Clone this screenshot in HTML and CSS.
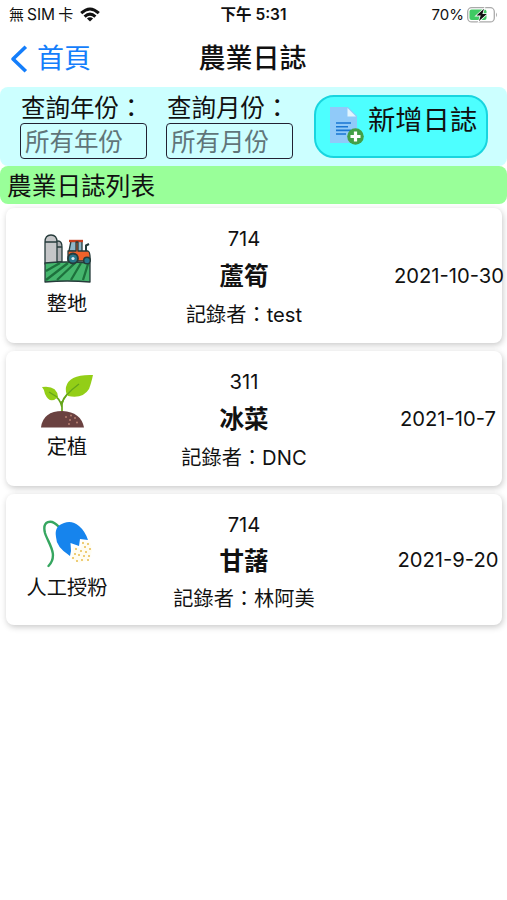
FILE: index.html
```html
<!DOCTYPE html>
<html lang="zh-TW">
<head>
    <meta charset="UTF-8">
    <meta name="viewport" content="width=device-width, initial-scale=1.0">
    <title>農業日誌</title>
    <link rel="stylesheet" href="styles.css">
</head>
<body>

    <div class="status-bar">
        <div class="carrier">
            <span>無<span class="sim">SIM</span>卡</span>
            <svg class="wifi" width="20" height="15" viewBox="0 0 20 15">
                <g fill="none" stroke="#111" stroke-width="3">
                    <path d="M1.2 6.2 Q10 -2.2 18.8 6.2"/>
                    <path d="M4.6 9.6 Q10 4.6 15.4 9.6"/>
                </g>
                <path d="M6.9 11.6 Q10 9 13.1 11.6 L10 14.6 Z" fill="#111"/>
            </svg>
        </div>
        <div class="clock">下午 5:31</div>
        <div class="battery">
            <span>70%</span>
            <svg width="31" height="16" viewBox="0 0 31 16">
                <rect x=".7" y=".7" width="26.6" height="14.2" rx="4" fill="#fff" stroke="#aaa" stroke-width="1.3"/>
                <rect x="2.5" y="2.5" width="17" height="10.6" rx="2" fill="#3fca63"/>
                <path d="M29 5.5 Q31 7.8 29 10.2 Z" fill="#aaa"/>
                <path d="M17 1.8 L9.5 8.6 H13.7 L12 14 L19.8 7 H15.4 Z" fill="#111" stroke="#fff" stroke-width="1.6" paint-order="stroke"/>
            </svg>
        </div>
    </div>

    <div class="nav-bar">
        <a class="back">
            <svg width="18" height="28" viewBox="0 0 18 28">
                <path d="M15.8 1.7 L3 14 L15.8 26.3" fill="none" stroke="#147efb" stroke-width="3.6" stroke-linejoin="round"/>
            </svg>
            <span>首頁</span>
        </a>
        <h1>農業日誌</h1>
    </div>

    <div class="filters">
        <div class="filter">
            <label for="year">查詢年份：</label>
            <input type="text" id="year" placeholder="所有年份">
        </div>
        <div class="filter">
            <label for="month">查詢月份：</label>
            <input type="text" id="month" placeholder="所有月份">
        </div>
        <button class="add-btn">
            <svg width="36" height="40" viewBox="0 0 36 40">
                <path d="M1 1 H19 L28 10 V37 H1 Z" fill="#90caf9"/>
                <path d="M18.5 2 V10.5 H27 Z" fill="#e1f5fe"/>
                <path d="M7 17 H22 M7 20.7 H19 M7 24.4 H22 M7 28 H17" stroke="#1976d2" stroke-width="1.6"/>
                <circle cx="26.5" cy="30.5" r="8.3" fill="#43a047"/>
                <path d="M26.5 25.5 V35.5 M21.5 30.5 H31.5" stroke="#fff" stroke-width="3.2"/>
            </svg>
            <span>新增日誌</span>
        </button>
    </div>

    <h2 class="list-title">農業日誌列表</h2>

    <div class="list">
        <div class="card">
            <div class="work">
                <svg width="50" height="50" viewBox="0 0 50 50" stroke="#263b3b" stroke-width="1.3" stroke-linejoin="round">
                    <path d="M12 28 V13 Q12 7 16 7 Q20 7 20 13 V28 Z" fill="#aeb0b3"/>
                    <path d="M3 30 V8 Q3 1 9 1 Q15 1 15 8 V30 Z" fill="#c5c6c8"/>
                    <path d="M3 8 H15 M15 13 H20" fill="none"/>
                    <path d="M27 17 L29 7 H40 V18 Z" fill="#8fb6c8"/>
                    <path d="M27 7 H41" stroke="#c8401f" stroke-width="2.4"/>
                    <path d="M26 17 H34 V8 H36 V17 H46 Q48.5 18 48 27 H26 Z" fill="#f0622a"/>
                    <path d="M44 17 V11.5 L47 10" fill="none" stroke-width="2"/>
                    <path d="M3 29 Q22 27 48 29 V48 Q25 46 3 48 Z" fill="#45b66d"/>
                    <path d="M18 29 L4 37 M26 29 L4 46 M33 29 L15 46 M39 29 L29 46 M46 30 L41 46" fill="none" stroke="#1d713c" stroke-width="2.3"/>
                    <circle cx="31" cy="24.5" r="5" fill="#27778a" stroke-width="1.8"/>
                    <circle cx="31" cy="24.5" r="1.6" fill="#dcecef" stroke="none"/>
                    <circle cx="45" cy="26.5" r="3.3" fill="#27778a" stroke-width="1.5"/>
                </svg>
                <span>整地</span>
            </div>
            <div class="info">
                <span>714</span>
                <b>蘆筍</b>
                <span>記錄者：test</span>
            </div>
            <div class="date">2021-10-30</div>
        </div>

        <div class="card">
            <div class="work planting">
                <svg width="54" height="55" viewBox="0 0 54 55">
                    <path d="M22 39 V27 M22 33 Q20 24 12 20 M22 29 Q24 20 39 11" fill="none" stroke="#65a51b" stroke-width="1.7"/>
                    <path d="M2 13 Q17 11 18 23 Q10 31 5 20 Q4 15 2 13 Z" fill="#93ce17"/>
                    <path d="M53 1 Q29 0 26 13 Q25 18 28 22 Q43 25 49 15 Q51 10 53 1 Z" fill="#93ce17"/>
                    <path d="M22 30 Q24 21 39 10 M17 23 L9 18" fill="none" stroke="#65a51b" stroke-width="1.3"/>
                    <path d="M1 53.5 Q3 37 22.5 37 Q41 38 44 53.5 Z" fill="#6a4140"/>
                    <g fill="#b77f70">
                        <circle cx="26" cy="43" r="1"/>
                        <circle cx="31" cy="41.5" r="1"/>
                        <circle cx="30" cy="46" r="1"/>
                        <circle cx="35" cy="44" r="1"/>
                        <circle cx="29" cy="50" r="1"/>
                        <circle cx="37" cy="48.5" r="1"/>
                    </g>
                </svg>
                <span>定植</span>
            </div>
            <div class="info">
                <span>311</span>
                <b>冰菜</b>
                <span>記錄者：DNC</span>
            </div>
            <div class="date">2021-10-7</div>
        </div>

        <div class="card short">
            <div class="work pollinate">
                <svg width="50" height="50" viewBox="0 0 50 50">
                    <path d="M17 8 C9 -1 0 2 3 14 C6 24 17 36 6.5 47" fill="none" stroke="#36a660" stroke-width="2.4" stroke-linecap="round"/>
                    <path d="M14 18 Q12 7 22 4 Q30 1 37 7 Q43 12 46 21 L38 20 L37 27 L28.5 24 L29 32 L28 37 Q14 28 14 18 Z" fill="#1684ed"/>
                    <path d="M31 33 L31.5 27 L39 30 L40 22 L48 23 L50 31 L48 40 L37 44 L29 40 Z" fill="#fffdf2"/>
                    <g fill="#e9bd4e">
                        <circle cx="41" cy="24" r="1"/>
                        <circle cx="46" cy="25" r="1"/>
                        <circle cx="43" cy="28" r="1"/>
                        <circle cx="48" cy="30" r="1"/>
                        <circle cx="34" cy="30" r="1"/>
                        <circle cx="39" cy="32" r="1"/>
                        <circle cx="44" cy="33" r="1"/>
                        <circle cx="33" cy="35" r="1"/>
                        <circle cx="37" cy="36" r="1"/>
                        <circle cx="42" cy="37" r="1"/>
                        <circle cx="47" cy="37" r="1"/>
                        <circle cx="31" cy="39" r="1"/>
                        <circle cx="35" cy="42" r="1"/>
                        <circle cx="40" cy="41" r="1"/>
                        <circle cx="46" cy="41" r="1"/>
                    </g>
                </svg>
                <span>人工授粉</span>
            </div>
            <div class="info">
                <span>714</span>
                <b>甘藷</b>
                <span>記錄者：林阿美</span>
            </div>
            <div class="date">2021-9-20</div>
        </div>
    </div>

</body>
</html>
```

FILE: styles.css
```css
* {
    box-sizing: border-box;
}

body {
    margin: 0;
    min-height: 100vh;
    font-family: Inter, "Noto Sans CJK TC", sans-serif;
    background-color: #fff;
    color: #111;
}

svg {
    display: block;
    flex-shrink: 0;
}

/* 狀態列 */
.status-bar {
    display: grid;
    grid-template-columns: 1fr auto 1fr;
    align-items: center;
    height: 30px;
    padding: 0 9px 0 9px;
    font-size: 15px;
    line-height: 28px;
}

.carrier {
    display: flex;
    align-items: center;
    gap: 7px;
}

.sim {
    margin: 0 3px;
    font-size: 15.5px;
}

.wifi {
    margin-top: -2px;
}

.clock {
    font-weight: 600;
    font-size: 15.5px;
}

.battery {
    display: flex;
    align-items: center;
    justify-content: flex-end;
    gap: 3px;
}

/* 導覽列 */
.nav-bar {
    display: grid;
    grid-template-columns: 1fr auto 1fr;
    align-items: center;
    height: 57px;
    padding: 0 12px 0 10px;
}

.back {
    display: flex;
    align-items: center;
    gap: 9px;
    font-size: 27px;
    line-height: 40px;
    color: #147efb;
}

.nav-bar h1 {
    margin: 0;
    font-size: 27px;
    font-weight: 500;
    line-height: 40px;
}

/* 查詢 */
.filters {
    display: flex;
    height: 79px;
    padding: 8px 19px 0 20px;
    background-color: #ccffff;
    border-radius: 8px;
}

.filter {
    width: 127px;
    margin-right: 20px;
}

.filter + .filter {
    margin-left: -1px;
    margin-right: 21px;
}

.filter label {
    display: block;
    padding-left: 1px;
    height: 28px;
    font-size: 24.5px;
    line-height: 27px;
    white-space: nowrap;
}

.filter input {
    display: block;
    width: 127px;
    height: 36px;
    padding: 2px 4px 0;
    border: 1.5px solid #223;
    border-radius: 4px;
    background: transparent;
    font-family: inherit;
    font-size: 24.5px;
}

.filter input::placeholder {
    color: #607579;
}

.add-btn {
    display: flex;
    width: 174px;
    height: 63px;
    padding: 9px 0 0 13px;
    gap: 3px;
    border: 2px solid #19d5df;
    border-radius: 20px;
    background-color: #4dffff;
    color: #111;
    font-family: inherit;
    font-size: 27.3px;
    line-height: 29px;
    white-space: nowrap;
}

.list-title {
    margin: 0;
    height: 38px;
    padding-left: 7px;
    border-radius: 8px;
    background-color: #99ff99;
    font-size: 24.7px;
    font-weight: 400;
    line-height: 41px;
}

/* 日誌列表 */
.list {
    display: flex;
    flex-direction: column;
    gap: 8px;
    padding: 4px 5px 12px 6px;
}

.card {
    display: grid;
    grid-template-columns: 122px 232px 1fr;
    height: 135px;
    border-radius: 8px;
    background-color: #fff;
    box-shadow: 1px 2px 6px rgba(0, 0, 0, 0.22);
    font-size: 20.2px;
}

.card.short {
    height: 131px;
}

.work {
    display: flex;
    flex-direction: column;
    align-items: center;
    padding-top: 26px;
    line-height: 40px;
}

.planting {
    padding-top: 23px;
}

.planting span {
    margin-top: -2px;
}

.pollinate {
    padding-top: 25px;
}

.pollinate span {
    margin-top: -1px;
}

.info {
    display: flex;
    flex-direction: column;
    align-items: center;
    padding-top: 12px;
    line-height: 37px;
}

.info b {
    font-size: 24.5px;
    font-weight: 700;
    line-height: 39px;
}

.short .info b {
    line-height: 37px;
}

.date {
    display: flex;
    align-items: center;
    justify-content: center;
    padding-left: 34px;
    white-space: nowrap;
}
```
